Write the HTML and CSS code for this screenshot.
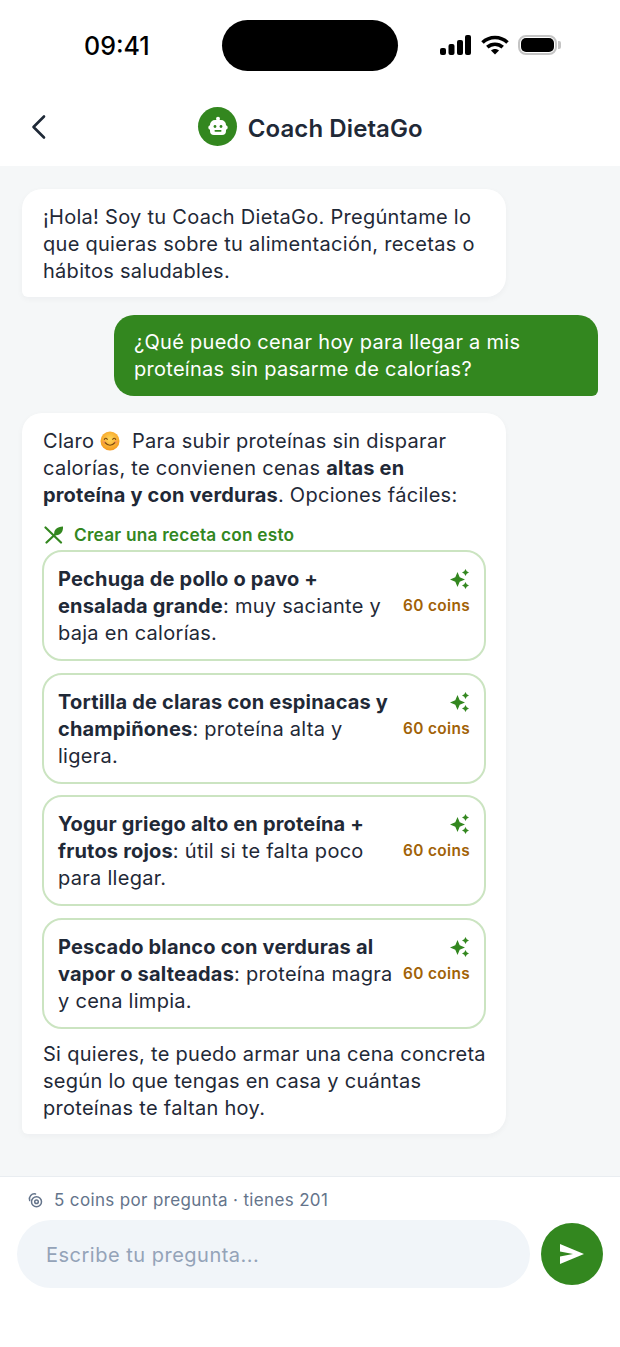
FILE: index.html
```html
<!DOCTYPE html>
<html lang="es">
<head>
    <meta charset="UTF-8">
    <meta name="viewport" content="width=device-width, initial-scale=1.0">
    <title>Coach DietaGo</title>
    <link rel="stylesheet" href="styles.css">
</head>
<body>
    <div class="statusbar">
        <span class="hora">09:41</span>
        <div class="isla"></div>
        <div class="estado">
            <svg width="31" height="20" viewBox="0 0 31 20"><rect x="0" y="13" width="6" height="7" rx="2"/><rect x="8.500" y="9" width="6" height="11" rx="2"/><rect x="17" y="5" width="6" height="15" rx="2"/><rect x="25" y="0" width="6" height="20" rx="2"/></svg>
            <svg width="28" height="20" viewBox="0 0 28 20" fill="none" stroke="#000" stroke-width="3.600"><path d="M1.500 7.500C8.500 .8 19.500 .8 26.500 7.500"/><path d="M6.300 12.200C10.700 8.200 17.300 8.200 21.700 12.200"/><path d="M10 15.500L14 19.500L18 15.500C15.700 13.500 12.300 13.500 10 15.500Z" fill="#000" stroke="none"/></svg>
            <div class="bateria"><div class="carga"></div></div>
        </div>
    </div>

    <header class="cabecera">
        <svg class="atras" width="18" height="26" viewBox="0 0 18 26" fill="none" stroke="#1f2937" stroke-width="2.600" stroke-linecap="round" stroke-linejoin="round"><path d="M14 2.500L3.500 13L14 23.500"/></svg>
        <div class="avatar">
            <svg width="24" height="24" viewBox="0 0 24 24" fill="#fff"><circle cx="12" cy="3.800" r="2"/><path d="M9 5h6a5 5 0 0 1 5 5v.2a2.400 2.400 0 0 1 0 4.600V16a4 4 0 0 1-4 4H8a4 4 0 0 1-4-4v-1.200a2.400 2.400 0 0 1 0-4.600V10a5 5 0 0 1 5-5z"/><circle cx="9" cy="11.500" r="1.400" fill="#33871f"/><circle cx="15" cy="11.500" r="1.400" fill="#33871f"/><rect x="8.500" y="15" width="7" height="1.700" rx=".8" fill="#33871f"/></svg>
        </div>
        <h1>Coach DietaGo</h1>
    </header>

    <main class="chat">
        <div class="burbuja coach">
            <p>¡Hola! Soy tu Coach DietaGo. Pregúntame lo que quieras sobre tu alimentación, recetas o hábitos saludables.</p>
        </div>

        <div class="burbuja usuario">
            <p>¿Qué puedo cenar hoy para llegar a mis proteínas sin pasarme de calorías?</p>
        </div>

        <div class="burbuja coach ultima">
            <p>Claro <svg class="emoji" width="20" height="20" viewBox="0 0 20 20"><defs><radialGradient id="cara" cx="50%" cy="40%" r="60%"><stop offset="0" stop-color="#ffd75a"/><stop offset="1" stop-color="#f59a1e"/></radialGradient></defs><circle cx="10" cy="10" r="9.500" fill="url(#cara)"/><path d="M4.300 8.300q1.500-2 3 0M12.700 8.300q1.500-2 3 0" fill="none" stroke="#7a4a12" stroke-width="1.100" stroke-linecap="round"/><path d="M5 11.500q5 5.500 10 0" fill="none" stroke="#7a4a12" stroke-width="1.200" stroke-linecap="round"/><circle cx="4" cy="11" r="1.500" fill="#f78a5a" opacity=".6"/><circle cx="16" cy="11" r="1.500" fill="#f78a5a" opacity=".6"/></svg>&nbsp; Para subir proteínas sin disparar calorías, te convienen cenas <strong>altas en proteína y con verduras</strong>. Opciones fáciles:</p>

            <div class="crear">
                <svg width="20" height="18" viewBox="0 0 20 18" fill="none" stroke="#33871f" stroke-width="2.200" stroke-linecap="round"><path d="M1.500 1.500L17 16.500"/><path d="M2.500 16.500L11 8.500"/><path d="M10.500 9C9 4.500 13 .5 19 .5C19.500 6 15.500 10.500 10.500 9Z" fill="#33871f" stroke="none"/></svg>
                <span>Crear una receta con esto</span>
            </div>

            <div class="opciones">
                <div class="opcion">
                    <p><strong>Pechuga de pollo o pavo + ensalada grande</strong>: muy saciante y baja en calorías.</p>
                    <div class="precio">
                        <svg width="20" height="20" viewBox="0 0 20 20" fill="#33871f"><path d="M7.500 3L9.700 8.300L15 10.500L9.700 12.700L7.500 18L5.300 12.700L0 10.500L5.300 8.300Z"/><path d="M15.500 0L16.700 2.300L19 3.500L16.700 4.700L15.500 7L14.300 4.700L12 3.500L14.300 2.300Z"/><path d="M15.500 13L16.700 15.300L19 16.500L16.700 17.700L15.500 20L14.300 17.700L12 16.500L14.300 15.300Z"/></svg>
                        <span>60 coins</span>
                    </div>
                </div>
                <div class="opcion">
                    <p><strong>Tortilla de claras con espinacas y champiñones</strong>: proteína alta y ligera.</p>
                    <div class="precio">
                        <svg width="20" height="20" viewBox="0 0 20 20" fill="#33871f"><path d="M7.500 3L9.700 8.300L15 10.500L9.700 12.700L7.500 18L5.300 12.700L0 10.500L5.300 8.300Z"/><path d="M15.500 0L16.700 2.300L19 3.500L16.700 4.700L15.500 7L14.300 4.700L12 3.500L14.300 2.300Z"/><path d="M15.500 13L16.700 15.300L19 16.500L16.700 17.700L15.500 20L14.300 17.700L12 16.500L14.300 15.300Z"/></svg>
                        <span>60 coins</span>
                    </div>
                </div>
                <div class="opcion">
                    <p><strong>Yogur griego alto en proteína + frutos rojos</strong>: útil si te falta poco para llegar.</p>
                    <div class="precio">
                        <svg width="20" height="20" viewBox="0 0 20 20" fill="#33871f"><path d="M7.500 3L9.700 8.300L15 10.500L9.700 12.700L7.500 18L5.300 12.700L0 10.500L5.300 8.300Z"/><path d="M15.500 0L16.700 2.300L19 3.500L16.700 4.700L15.500 7L14.300 4.700L12 3.500L14.300 2.300Z"/><path d="M15.500 13L16.700 15.300L19 16.500L16.700 17.700L15.500 20L14.300 17.700L12 16.500L14.300 15.300Z"/></svg>
                        <span>60 coins</span>
                    </div>
                </div>
                <div class="opcion">
                    <p><strong>Pescado blanco con verduras al vapor o salteadas</strong>: proteína magra y cena limpia.</p>
                    <div class="precio">
                        <svg width="20" height="20" viewBox="0 0 20 20" fill="#33871f"><path d="M7.500 3L9.700 8.300L15 10.500L9.700 12.700L7.500 18L5.300 12.700L0 10.500L5.300 8.300Z"/><path d="M15.500 0L16.700 2.300L19 3.500L16.700 4.700L15.500 7L14.300 4.700L12 3.500L14.300 2.300Z"/><path d="M15.500 13L16.700 15.300L19 16.500L16.700 17.700L15.500 20L14.300 17.700L12 16.500L14.300 15.300Z"/></svg>
                        <span>60 coins</span>
                    </div>
                </div>
            </div>

            <p>Si quieres, te puedo armar una cena concreta según lo que tengas en casa y cuántas proteínas te faltan hoy.</p>
        </div>
    </main>

    <footer class="pie">
        <div class="saldo">
            <svg width="16" height="16" viewBox="0 0 16 16" fill="none" stroke="#64748b" stroke-width="1.500"><circle cx="9.500" cy="9.700" r="5"/><circle cx="9.500" cy="9.700" r="1.800"/><path d="M2.700 8.500A5 5 0 0 1 8.500 2" stroke-linecap="round"/></svg>
            <span>5 coins por pregunta · tienes 201</span>
        </div>
        <div class="entrada">
            <div class="campo">Escribe tu pregunta...</div>
            <button class="enviar" aria-label="Enviar">
                <svg width="26" height="22" viewBox="0 0 26 22" fill="#fff"><path d="M1 1L25 11L1 21V13.500L14 11L1 8.500Z"/></svg>
            </button>
        </div>
    </footer>
</body>
</html>
```
FILE: styles.css
```css
* {
    box-sizing: border-box;
}
html, body {
    margin: 0;
    height: 100%;
}
body {
    font-family: Inter, "Liberation Sans", sans-serif;
    background: #fff;
    color: #1f2937;
    display: flex;
    flex-direction: column;
    height: 1347px;
}
p {
    margin: 0;
}
.statusbar {
    height: 91px;
    display: flex;
    align-items: flex-start;
    padding-top: 20px;
}
.hora {
    width: 222px;
    padding: 10px 0 0 84px;
    font-size: 25px;
    line-height: 32px;
    font-weight: 500;
    color: #000;
}
.isla {
    width: 176px;
    height: 51px;
    background: #000;
    border-radius: 26px;
}
.estado {
    display: flex;
    align-items: center;
    gap: 9.500px;
    padding: 15px 0 0 42px;
}
.bateria {
    position: relative;
    width: 39px;
    height: 20px;
    border: 2px solid #c4c4c4;
    border-radius: 8px;
    padding: 1px;
}
.bateria::after {
    content: "";
    position: absolute;
    right: -6px;
    top: 4px;
    width: 3px;
    height: 8px;
    background: #c4c4c4;
    border-radius: 0 2px 2px 0;
}
.carga {
    height: 100%;
    background: #000;
    border-radius: 5px;
}
.cabecera {
    height: 75px;
    position: relative;
    display: flex;
    align-items: center;
    justify-content: center;
    gap: 10.500px;
    padding: 0 0 1px 1px;
}
.atras {
    position: absolute;
    left: 30px;
    top: 23px;
}
.avatar {
    width: 39px;
    height: 39px;
    margin-bottom: 3px;
    border-radius: 50%;
    background: #33871f;
    display: flex;
    align-items: center;
    justify-content: center;
}
.cabecera h1 {
    margin: 0;
    font-size: 24px;
    font-weight: 600;
    letter-spacing: 0.1px;
    color: #1f2937;
}
.chat {
    flex: 1;
    background: #f5f7f8;
    padding: 23px 22px 0;
    display: flex;
    flex-direction: column;
    gap: 17.500px;
}
.burbuja {
    width: 484px;
    padding: 14.500px 19px 12.500px 21px;
    font-size: 20px;
    line-height: 27px;
    letter-spacing: 0.28px;
    border-radius: 20px;
}
.coach {
    background: #fff;
    border-bottom-left-radius: 6px;
    box-shadow: 0 2px 6px rgba(15, 23, 42, 0.04);
}
.ultima {
    padding-top: 15px;
}
.usuario {
    align-self: flex-end;
    background: #33871f;
    color: #fff;
    padding-left: 20px;
    border-bottom-right-radius: 6px;
}
.burbuja strong {
    font-weight: 700;
    letter-spacing: 0.18px;
}
.emoji {
    vertical-align: -3px;
}
.crear {
    display: flex;
    align-items: center;
    gap: 10px;
    margin: 14px 0 3px 1px;
    font-size: 17.300px;
    line-height: 24px;
    letter-spacing: 0.2px;
    font-weight: 600;
    color: #33871f;
}
.opciones {
    display: flex;
    flex-direction: column;
    gap: 11.500px;
    margin: 0 1px 12px -1px;
}
.opcion {
    height: 111px;
    display: flex;
    justify-content: space-between;
    gap: 4px;
    padding: 14px 14px 0;
    background: #fff;
    border: 2px solid #cbe4c1;
    border-radius: 20px;
}
.opcion p {
    flex: 1;
}
.precio {
    width: 68px;
    display: flex;
    flex-direction: column;
    align-items: flex-end;
    gap: 7px;
    padding-top: 3px;
    flex-shrink: 0;
    font-size: 15.400px;
    line-height: 20px;
    font-weight: 600;
    letter-spacing: 0.35px;
    color: #a16207;
    white-space: nowrap;
}
.pie {
    height: 171px;
    background: #fff;
    border-top: 1px solid #e9edf1;
    padding: 12px 17px 0;
}
.saldo {
    display: flex;
    align-items: center;
    gap: 11px;
    padding-left: 10px;
    font-size: 17px;
    line-height: 22px;
    letter-spacing: 0.35px;
    color: #64748b;
}
.entrada {
    display: flex;
    align-items: center;
    gap: 11px;
    margin-top: 9px;
}
.campo {
    width: 513px;
    height: 68px;
    padding: 1px 29px 0;
    display: flex;
    align-items: center;
    background: #f1f5f9;
    border-radius: 34px;
    font-size: 20px;
    letter-spacing: 0.5px;
    color: #94a3b8;
}
.enviar {
    width: 62px;
    height: 62px;
    border: none;
    border-radius: 50%;
    background: #33871f;
    display: flex;
    align-items: center;
    justify-content: center;
    padding: 0;
}
```
